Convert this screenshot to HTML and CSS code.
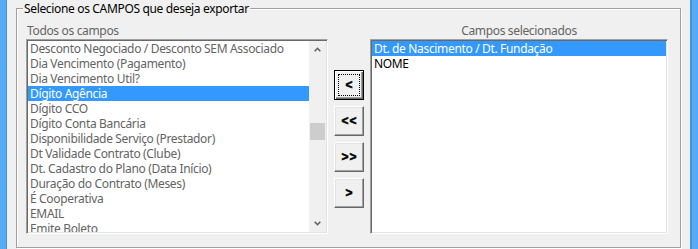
FILE: index.html
```html
<!DOCTYPE html>
<html lang="pt-BR">
<head>
<meta charset="utf-8">
<title>Exportar campos</title>
<link rel="stylesheet" href="styles.css">
</head>
<body>
<div class="window">
  <div class="frame-l"></div>
  <section class="group">
    <div class="group-title">Selecione os CAMPOS que deseja exportar</div>
    <div class="cols">
      <div class="cap cap-left">Todos os campos</div>
      <div class="cap cap-right">Campos selecionados</div>
      <div class="listbox list-left">
        <ul class="items">
          <li>Desconto Negociado / Desconto SEM Associado</li>
          <li>Dia Vencimento (Pagamento)</li>
          <li>Dia Vencimento Util?</li>
          <li class="sel">Dígito Agência</li>
          <li>Dígito CCO</li>
          <li>Dígito Conta Bancária</li>
          <li>Disponibilidade Serviço (Prestador)</li>
          <li>Dt Validade Contrato (Clube)</li>
          <li>Dt. Cadastro do Plano (Data Início)</li>
          <li>Duração do Contrato (Meses)</li>
          <li>É Cooperativa</li>
          <li>EMAIL</li>
          <li>Emite Boleto</li>
        </ul>
        <div class="vscroll">
          <div class="sb-btn"><svg width="7" height="5" viewBox="0 0 7 5"><polyline points="0.7,4.3 3.5,1.3 6.3,4.3" fill="none" stroke="#606060" stroke-width="1.6"/></svg></div>
          <div class="track"><div class="thumb"></div></div>
          <div class="sb-btn"><svg width="7" height="5" viewBox="0 0 7 5"><polyline points="0.7,0.7 3.5,3.7 6.3,0.7" fill="none" stroke="#606060" stroke-width="1.6"/></svg></div>
        </div>
      </div>
      <div class="buttons">
        <button class="mv focus" type="button">&lt;</button>
        <button class="mv" type="button">&lt;&lt;</button>
        <button class="mv" type="button">&gt;&gt;</button>
        <button class="mv" type="button">&gt;</button>
      </div>
      <div class="listbox list-right">
        <ul class="items dark">
          <li class="sel">Dt. de Nascimento / Dt. Fundação</li>
          <li>NOME</li>
        </ul>
      </div>
    </div>
  </section>
  <div class="frame-r"></div>
</div>
</body>
</html>
```
FILE: styles.css
```css
html, body {
  margin: 0;
  padding: 0;
}
body {
  width: 698px;
  height: 249px;
  overflow: hidden;
  background: #f0f0f0;
  font-family: "Noto Sans", "Open Sans", sans-serif;
  font-size: 12px;
  line-height: 15px;
  letter-spacing: -0.34px;
  color: #000;
}
.window {
  display: flex;
  height: 249px;
}
.frame-l {
  flex: none;
  width: 6px;
  background: #58a9f6;
  border-right: 1px solid #3f92e4;
}
.frame-r {
  flex: none;
  width: 6px;
  background: #58a9f6;
  border-left: 2px solid #3f92e4;
}
.group {
  flex: 1;
  min-width: 0;
  margin: 8px 9px 0 9px;
  height: 240px;
  box-sizing: border-box;
  border: 1px solid #a0a0a0;
  box-shadow: inset 1px 1px 0 #fff, 1px 1px 0 #fff;
  padding: 0 12px 13px 9px;
}
.group-title {
  width: fit-content;
  margin: -8px 0 0 -3px;
  padding: 0 1px;
  background: #f0f0f0;
  white-space: nowrap;
}
.cols {
  margin-top: 7px;
  display: grid;
  grid-template-columns: 302px 30px 298px;
  grid-template-rows: 16px 195px;
  grid-template-areas:
    "capl . capr"
    "listl btns listr";
  column-gap: 6px;
}
.cap {
  color: #646464;
  white-space: nowrap;
}
.cap-left {
  grid-area: capl;
  padding-left: 1px;
}
.cap-right {
  grid-area: capr;
  text-align: center;
}
.listbox {
  box-sizing: border-box;
  height: 195px;
  border: 1px solid;
  border-color: #a0a0a0 #ffffff #ffffff #a0a0a0;
  box-shadow: inset 1px 1px 0 #696969, inset -1px -1px 0 #e3e3e3;
  padding: 1px;
  background: #fff;
  display: flex;
  overflow: hidden;
}
.list-left { grid-area: listl; }
.list-right { grid-area: listr; }
.items {
  flex: 1;
  min-width: 0;
  list-style: none;
  margin: 0;
  padding: 0;
  overflow: hidden;
  color: #646464;
}
.items.dark { color: #000; }
.items li {
  height: 15px;
  padding-left: 2px;
  white-space: nowrap;
}
.items li.sel {
  background: #3399ff;
  color: #fff;
}
.vscroll {
  flex: none;
  width: 17px;
  background: #f0f0f0;
  display: flex;
  flex-direction: column;
}
.sb-btn {
  flex: none;
  height: 17px;
  display: flex;
  align-items: center;
  justify-content: center;
}
.track {
  flex: 1;
}
.thumb {
  margin: 65px 1px 0 1px;
  height: 17px;
  background: #cdcdcd;
}
.buttons {
  grid-area: btns;
  display: flex;
  flex-direction: column;
  gap: 6px;
  padding-top: 31px;
}
.mv {
  box-sizing: border-box;
  width: 30px;
  height: 30px;
  margin: 0;
  padding: 0 0 1px 0;
  background: #f0f0f0;
  font-family: "Liberation Sans", Arial, sans-serif;
  font-weight: bold;
  font-size: 12px;
  letter-spacing: 1px;
  text-indent: 1px;
  -webkit-text-stroke: 0.5px #000;
  color: #000;
  border: 1px solid;
  border-color: #ffffff #696969 #696969 #ffffff;
  box-shadow: inset -1px -1px 0 #a0a0a0, inset 1px 1px 0 #e3e3e3;
  border-radius: 0;
}
.mv.focus {
  border: 1px solid #000;
  box-shadow: inset 1px 1px 0 #fff, inset -1px -1px 0 #696969, inset -2px -2px 0 #a0a0a0;
  outline: 1px dotted #000;
  outline-offset: -5px;
}
```
